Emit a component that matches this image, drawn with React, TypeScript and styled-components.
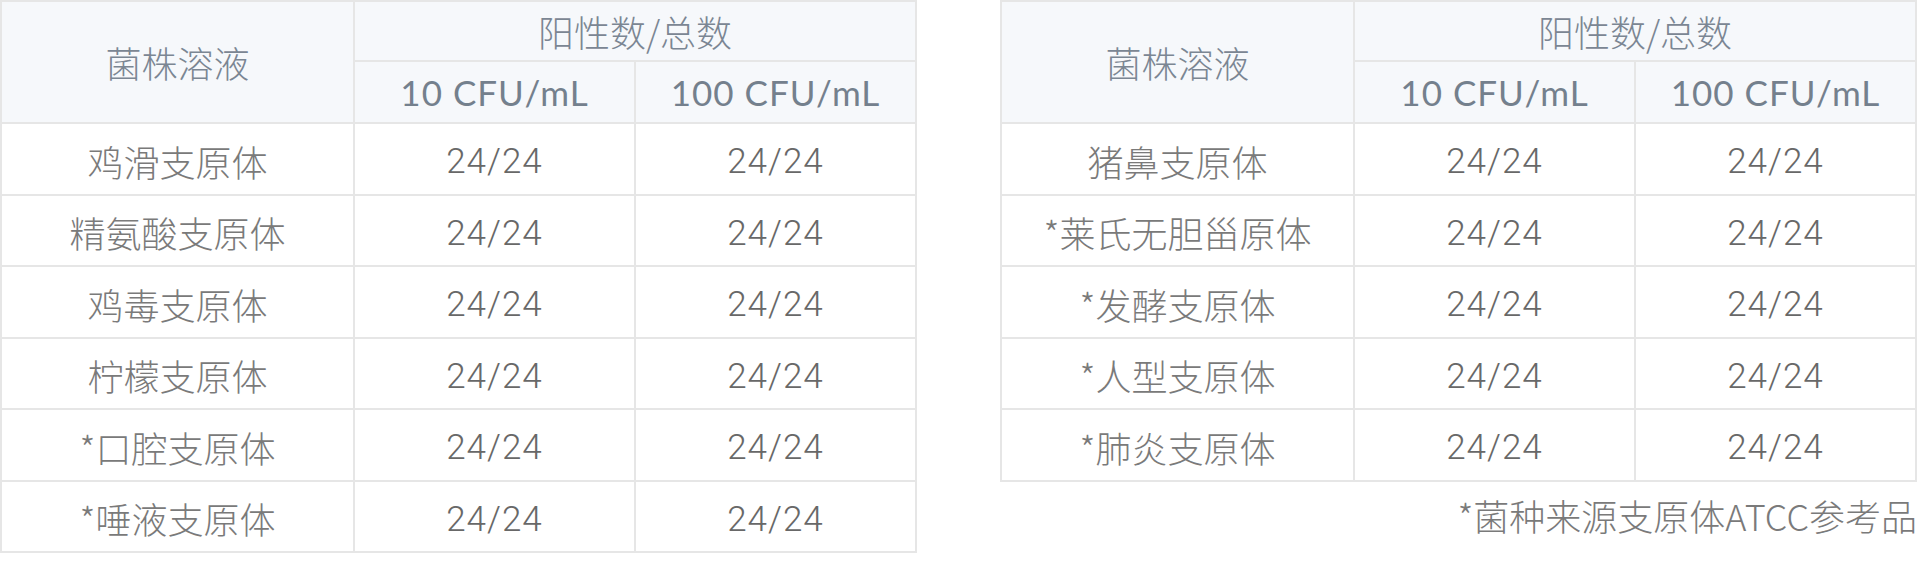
import React from 'react'
import styled, { createGlobalStyle } from 'styled-components'

const GlobalStyle = createGlobalStyle`
  body {
    margin: 0;
    background: #ffffff;
  }
`

const cjk = '"Noto Sans CJK SC", "Noto Sans", sans-serif'

const Page = styled.div`
  display: flex;
  align-items: flex-start;
  gap: 83px;
  width: 1920px;
`

const Panel = styled.div`
  width: 917px;
  display: flex;
  flex-direction: column;
`

const Table = styled.table`
  width: 100%;
  table-layout: fixed;
  border-collapse: separate;
  border-spacing: 0;
  border-top: 2px solid #e6e6e6;
  border-left: 2px solid #e6e6e6;
`

const HeadCell = styled.th<{ $latin?: boolean }>`
  box-sizing: border-box;
  height: ${({ $latin }) => ($latin ? '62px' : '60px')};
  padding: 0;
  background: #f6f8fb;
  border-right: 2px solid #e6e6e6;
  border-bottom: 2px solid #e6e6e6;
  color: ${({ $latin }) => ($latin ? '#74808d' : '#7b8693')};
  font-family: ${({ $latin }) => ($latin ? `Lato, ${cjk}` : cjk)};
  font-size: ${({ $latin }) => ($latin ? '35px' : '36px')};
  letter-spacing: ${({ $latin }) => ($latin ? '1px' : '0')};
  font-weight: ${({ $latin }) => ($latin ? 400 : 300)};
  text-align: center;
  vertical-align: middle;
  white-space: nowrap;
`

const NameCell = styled.td`
  box-sizing: border-box;
  height: 71.5px;
  padding: 4px 0 0;
  border-right: 2px solid #e6e6e6;
  border-bottom: 2px solid #e6e6e6;
  color: #7a7a7a;
  font-family: ${cjk};
  font-size: 36px;
  font-weight: 300;
  text-align: center;
  vertical-align: middle;
  white-space: nowrap;
`

const CountCell = styled(NameCell)`
  padding-top: 6px;
  color: #686868;
  font-family: Roboto, ${cjk};
  font-size: 35px;
  letter-spacing: 1px;
`

const Note = styled.p`
  margin: 10px 0 0;
  color: #7a7a7a;
  font-family: ${cjk};
  font-size: 36px;
  font-weight: 300;
  line-height: 46px;
  text-align: right;
  white-space: nowrap;
`

interface ResultTableProps {
  strains: string[]
}

const ResultTable: React.FC<ResultTableProps> = ({ strains }) => (
  <Table>
    <colgroup>
      <col style={{ width: 353 }} />
      <col style={{ width: 281 }} />
      <col style={{ width: 281 }} />
    </colgroup>
    <thead>
      <tr>
        <HeadCell rowSpan={2}>菌株溶液</HeadCell>
        <HeadCell colSpan={2}>阳性数/总数</HeadCell>
      </tr>
      <tr>
        <HeadCell $latin>10 CFU/mL</HeadCell>
        <HeadCell $latin>100 CFU/mL</HeadCell>
      </tr>
    </thead>
    <tbody>
      {strains.map((name) => (
        <tr key={name}>
          <NameCell>{name}</NameCell>
          <CountCell>24/24</CountCell>
          <CountCell>24/24</CountCell>
        </tr>
      ))}
    </tbody>
  </Table>
)

const leftStrains = ['鸡滑支原体', '精氨酸支原体', '鸡毒支原体', '柠檬支原体', '*口腔支原体', '*唾液支原体']
const rightStrains = ['猪鼻支原体', '*莱氏无胆甾原体', '*发酵支原体', '*人型支原体', '*肺炎支原体']

export default function App() {
  return (
    <>
      <GlobalStyle />
      <Page>
        <Panel>
          <ResultTable strains={leftStrains} />
        </Panel>
        <Panel>
          <ResultTable strains={rightStrains} />
          <Note>*菌种来源支原体ATCC参考品</Note>
        </Panel>
      </Page>
    </>
  )
}
